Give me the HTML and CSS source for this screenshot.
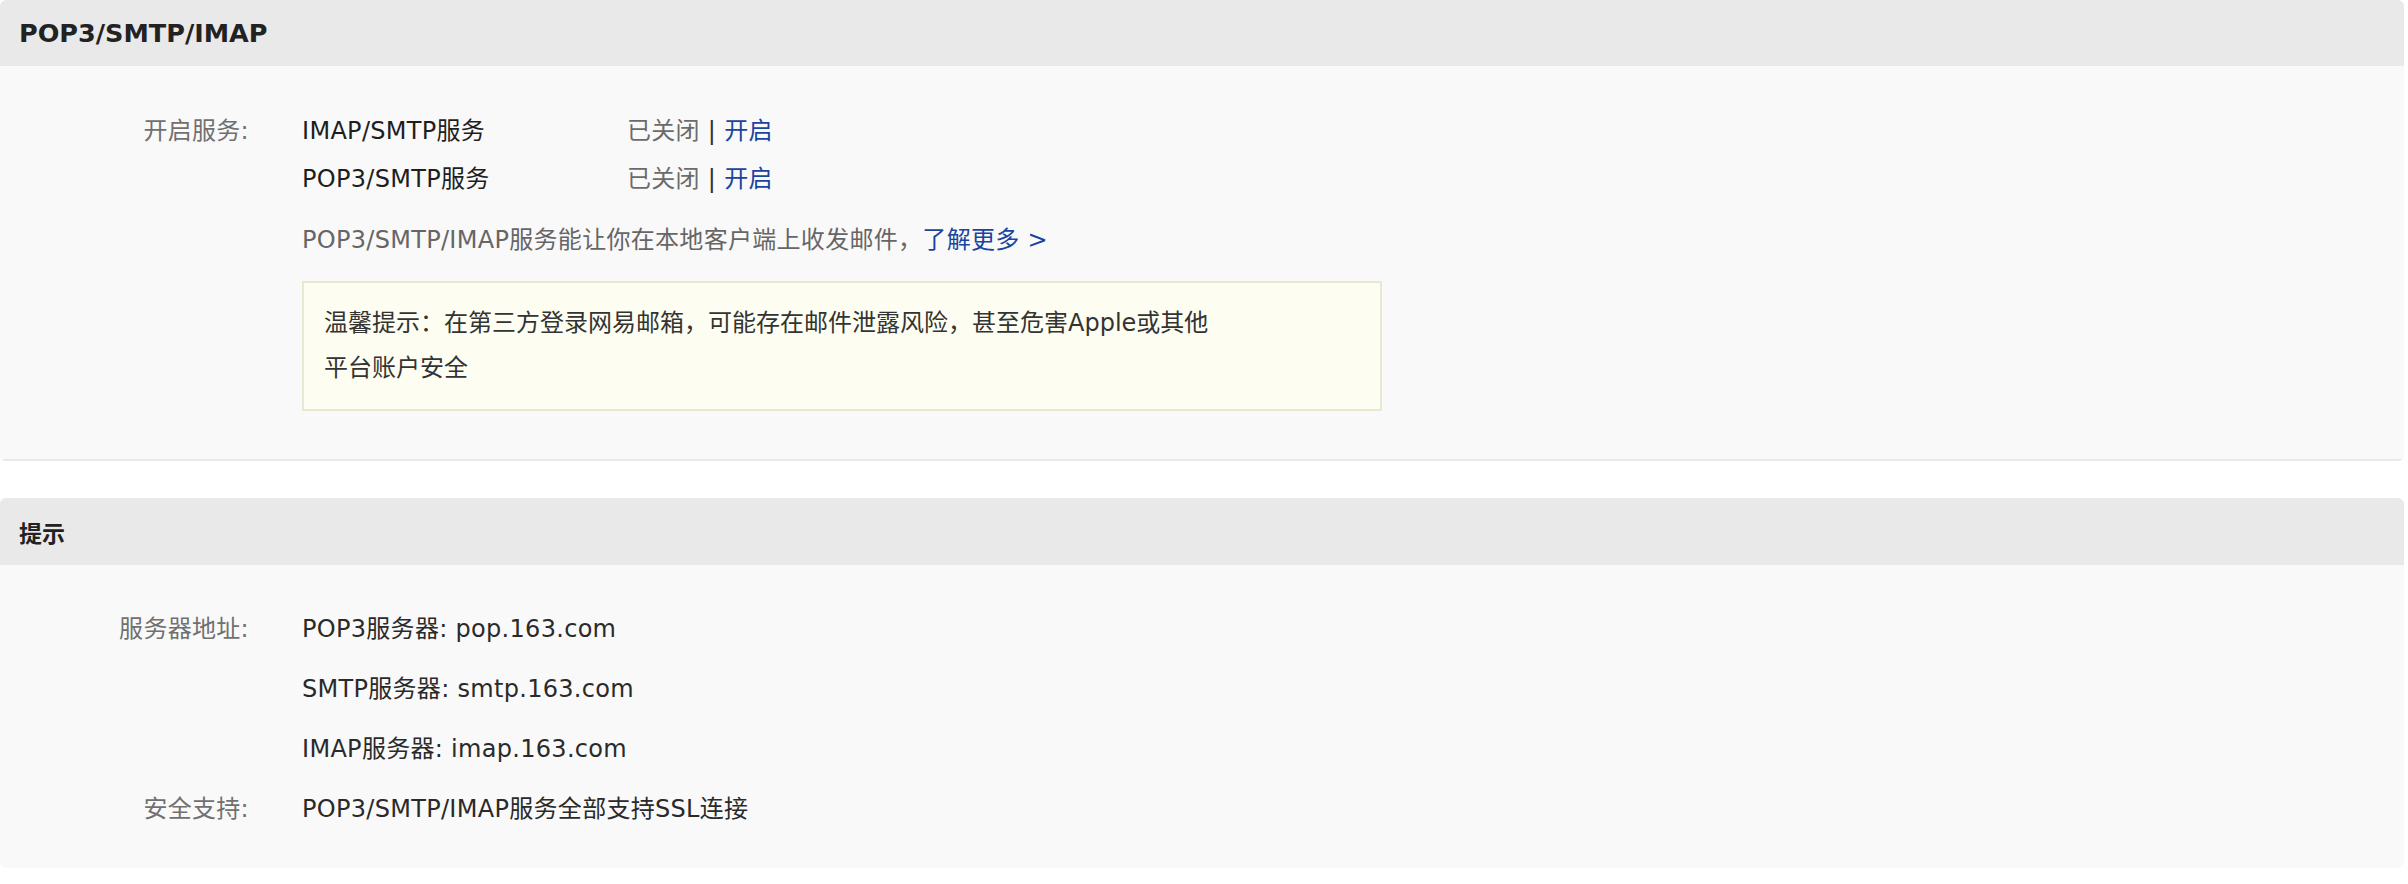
FILE: index.html
```html
<!DOCTYPE html>
<html lang="zh-CN">
<head>
<meta charset="utf-8">
<title>POP3/SMTP/IMAP</title>
<link rel="stylesheet" href="styles.css">
</head>
<body>
<section class="panel panel-first">
  <div class="panel-head">POP3/SMTP/IMAP</div>
  <div class="panel-body body-services">
    <div class="field">
      <div class="label">开启服务:</div>
      <div class="value">
        <div class="service-row">
          <span class="svc-name">IMAP/SMTP服务</span>
          <span class="svc-status">已关闭 <span class="sep">|</span> <a class="link" href="#">开启</a></span>
        </div>
        <div class="service-row">
          <span class="svc-name">POP3/SMTP服务</span>
          <span class="svc-status">已关闭 <span class="sep">|</span> <a class="link" href="#">开启</a></span>
        </div>
        <p class="desc">POP3/SMTP/IMAP服务能让你在本地客户端上收发邮件，<a class="link" href="#">了解更多 &gt;</a></p>
        <div class="notice">温馨提示：在第三方登录网易邮箱，可能存在邮件泄露风险，甚至危害Apple或其他<br>平台账户安全</div>
      </div>
    </div>
  </div>
</section>

<section class="panel panel-second">
  <div class="panel-head">提示</div>
  <div class="panel-body body-tips">
    <div class="field tip-field">
      <div class="label">服务器地址:</div>
      <div class="value">
        <div class="tip-line">POP3服务器: pop.163.com</div>
        <div class="tip-line">SMTP服务器: smtp.163.com</div>
        <div class="tip-line">IMAP服务器: imap.163.com</div>
      </div>
    </div>
    <div class="field tip-field">
      <div class="label">安全支持:</div>
      <div class="value">
        <div class="tip-line">POP3/SMTP/IMAP服务全部支持SSL连接</div>
      </div>
    </div>
  </div>
</section>
</body>
</html>
```

FILE: styles.css
```css
html, body {
  margin: 0;
  padding: 0;
  background: #ffffff;
}

body {
  font-family: "DejaVu Sans", "Noto Sans CJK SC", sans-serif;
  font-size: 24px;
  letter-spacing: 0.3px;
  color: #222222;
}

.panel {
  margin-right: 4px;
  border-radius: 6px;
  overflow: hidden;
}

.panel-second {
  margin-top: 37px;
}

.panel-head {
  height: 66px;
  display: flex;
  align-items: center;
  padding-left: 19px;
  background: #e9e9e9;
  font-weight: bold;
  font-size: 25.5px;
  letter-spacing: 0;
  color: #222222;
}

.panel-second .panel-head {
  height: 67px;
  font-size: 23px;
}

.panel-body {
  background: #f9f9f9;
}

.body-services {
  padding: 41px 0 48px;
  border-bottom: 2px solid #e8e8e8;
}

.body-tips {
  padding: 34px 0 29px;
}

.field {
  display: grid;
  grid-template-columns: 249px 1fr;
  column-gap: 53px;
}

.label {
  text-align: right;
  color: #707070;
  line-height: 48px;
}

.tip-field .label {
  line-height: 60px;
}

.service-row {
  display: flex;
  line-height: 48px;
}

.svc-name {
  width: 325px;
  color: #1e1e1e;
}

.svc-status {
  color: #6b6b6b;
}

.sep {
  color: #333333;
}

.link {
  color: #1a44a2;
  text-decoration: none;
}

.desc {
  margin: 13px 0 0;
  line-height: 48px;
  color: #666666;
}

.notice {
  box-sizing: border-box;
  width: 1080px;
  margin-top: 17px;
  padding: 18px 20px;
  border: 2px solid #e8e8d3;
  background: #fdfef1;
  line-height: 45px;
  letter-spacing: 0;
  color: #333333;
}

.tip-line {
  line-height: 60px;
  color: #2a2a2a;
}
```
